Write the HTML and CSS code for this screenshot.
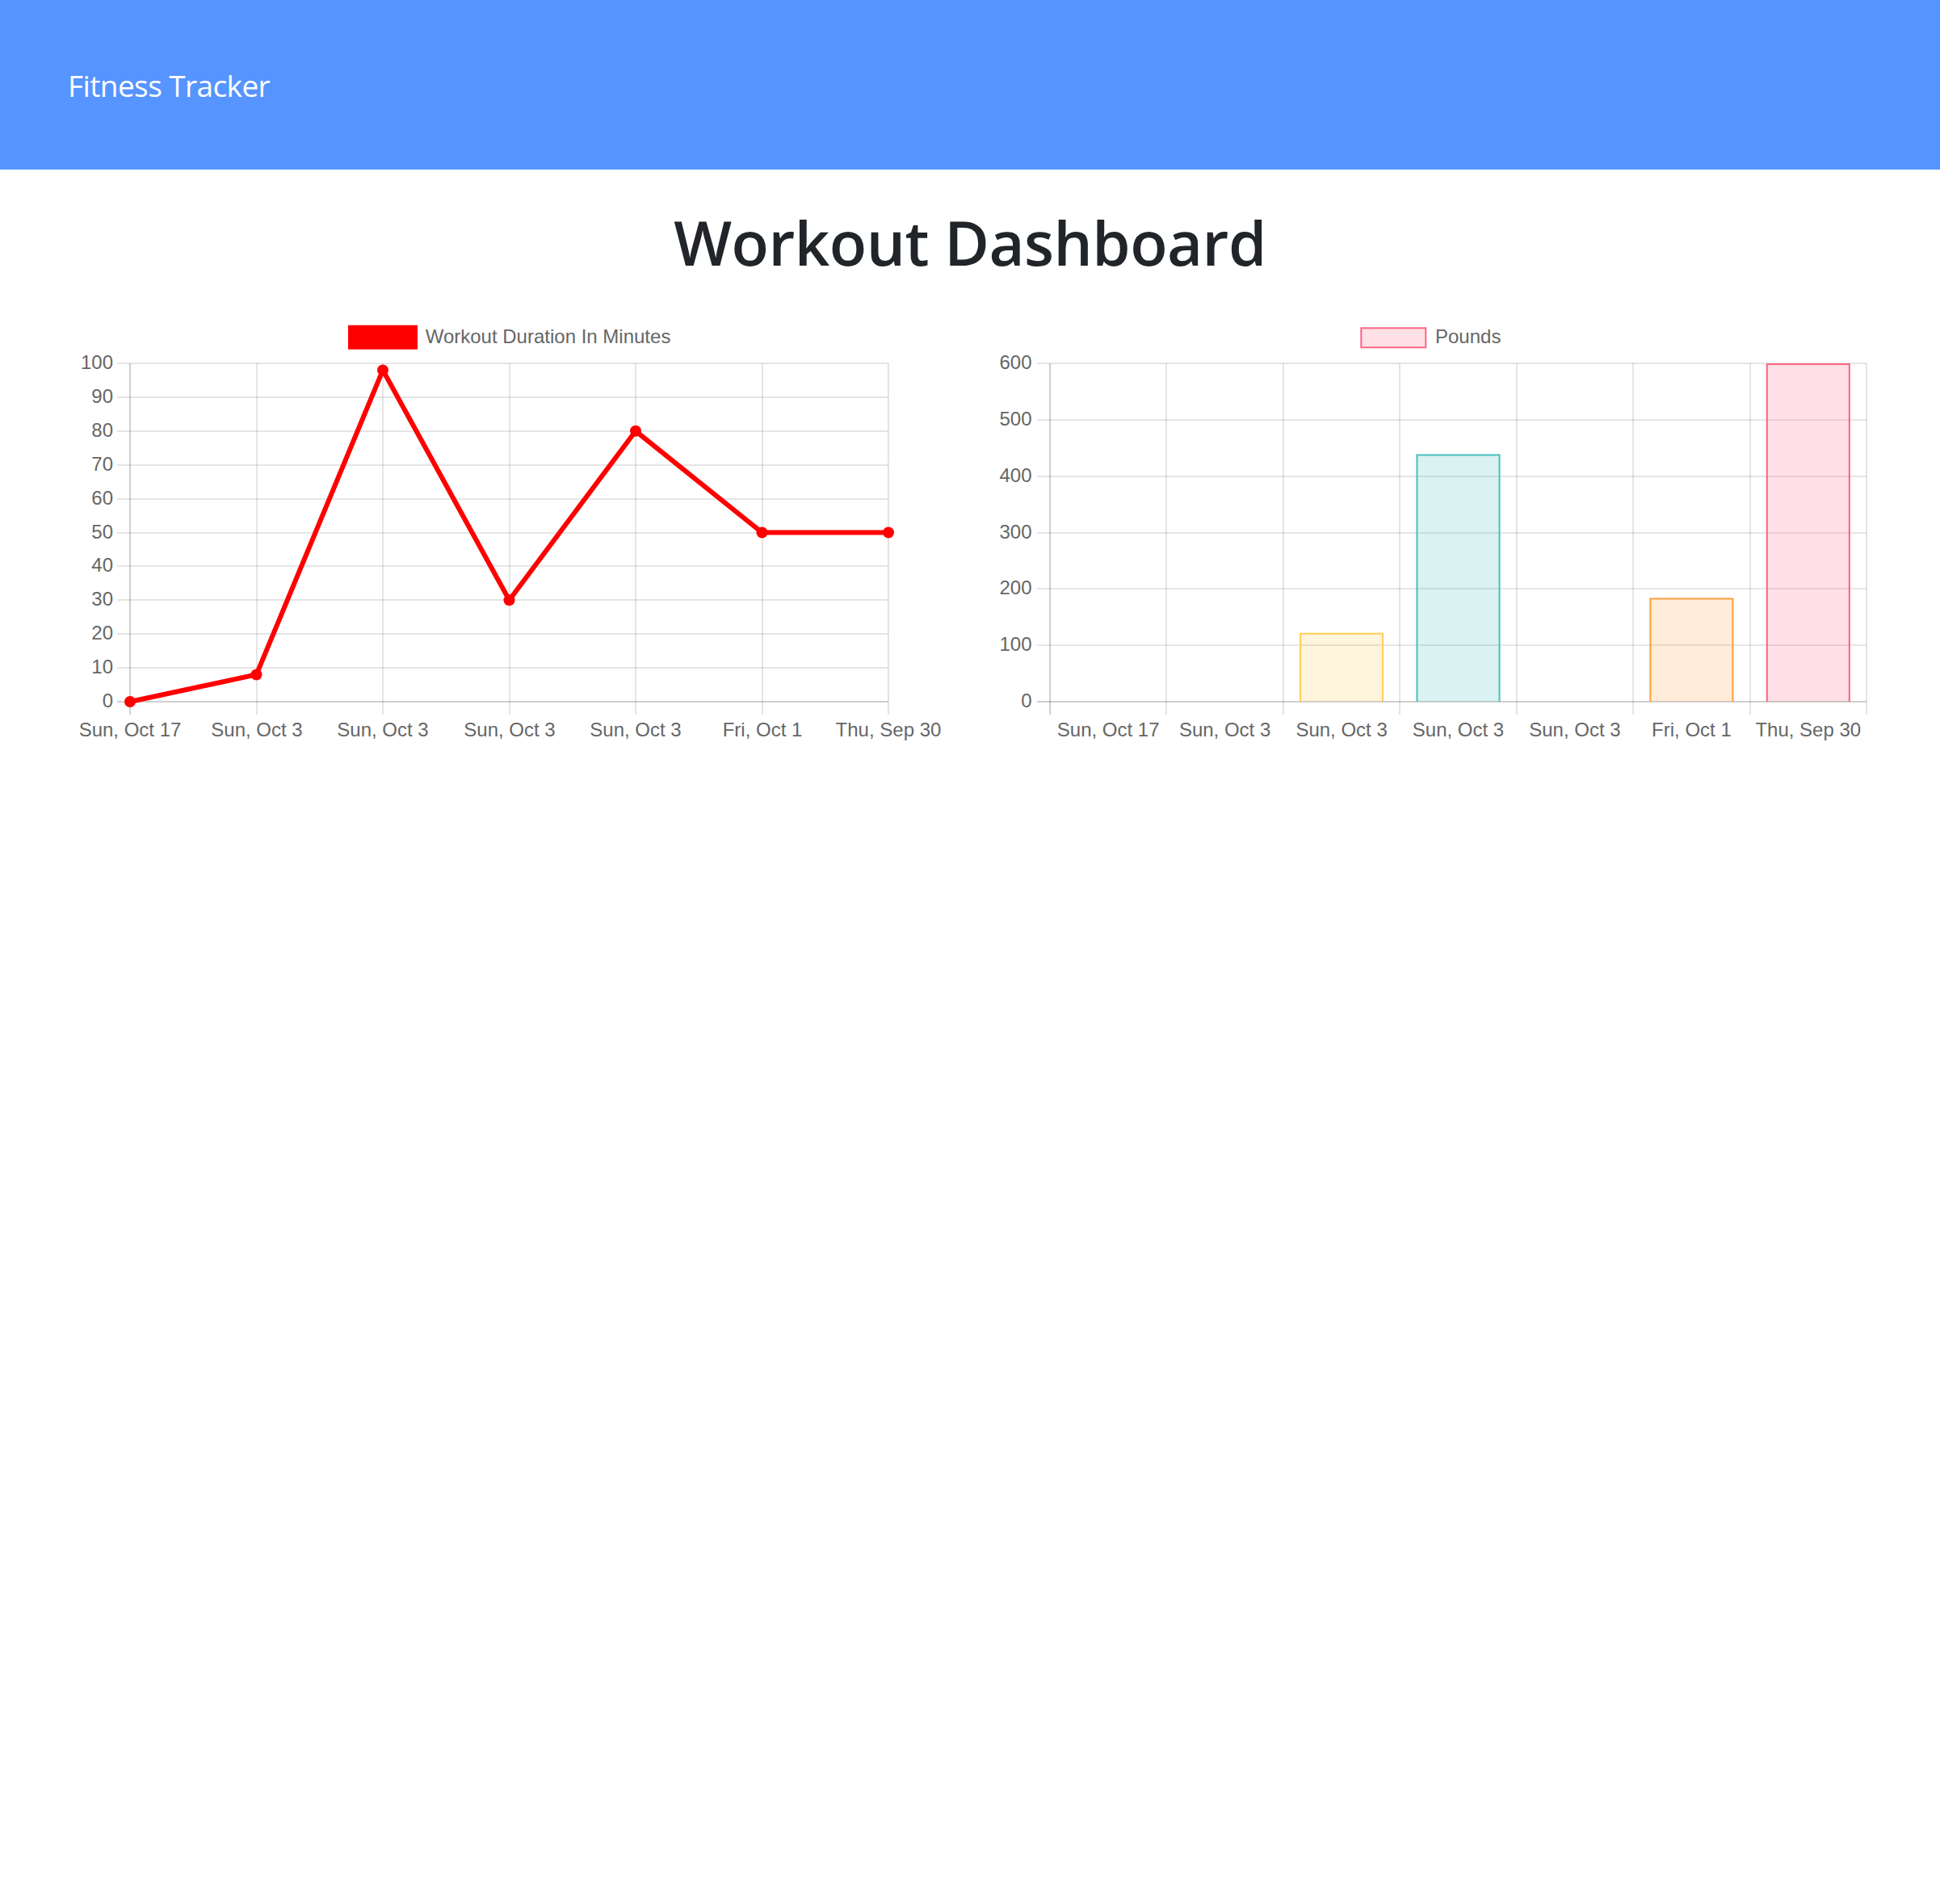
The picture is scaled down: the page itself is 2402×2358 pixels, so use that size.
FILE: index.html
```html
<!DOCTYPE html>
<html lang="en">
<head>
<meta charset="utf-8">
<title>Fitness Tracker</title>
<link rel="stylesheet" href="styles.css">
</head>
<body>
<nav class="navbar"><span class="brand">Fitness Tracker</span></nav>
<main class="main">
  <h1 class="title">Workout Dashboard</h1>
  <section class="charts">
    <div class="chart-col">
      <svg class="chart" width="1076" height="540" viewBox="0 0 1076 540">
        <g class="legend">
          <rect x="342" y="15.7" width="80" height="24" fill="#ff0000" stroke="#ff0000" stroke-width="6"/>
          <text x="434.7" y="35">Workout Duration In Minutes</text>
        </g>
        <g class="grid">
          <line x1="53" y1="60" x2="1008" y2="60"/>
          <line x1="53" y1="102" x2="1008" y2="102"/>
          <line x1="53" y1="144" x2="1008" y2="144"/>
          <line x1="53" y1="186" x2="1008" y2="186"/>
          <line x1="53" y1="228" x2="1008" y2="228"/>
          <line x1="53" y1="270" x2="1008" y2="270"/>
          <line x1="53" y1="311" x2="1008" y2="311"/>
          <line x1="53" y1="353" x2="1008" y2="353"/>
          <line x1="53" y1="395" x2="1008" y2="395"/>
          <line x1="53" y1="437" x2="1008" y2="437"/>
          <line x1="226" y1="60" x2="226" y2="495"/>
          <line x1="382" y1="60" x2="382" y2="495"/>
          <line x1="539" y1="60" x2="539" y2="495"/>
          <line x1="695" y1="60" x2="695" y2="495"/>
          <line x1="852" y1="60" x2="852" y2="495"/>
          <line x1="1008" y1="60" x2="1008" y2="495"/>
        </g>
        <g class="axis">
          <line x1="69" y1="60" x2="69" y2="495"/>
          <line x1="53" y1="479" x2="1008" y2="479"/>
        </g>
        <g class="ylabels">
          <text x="48" y="67">100</text>
          <text x="48" y="109">90</text>
          <text x="48" y="151">80</text>
          <text x="48" y="193">70</text>
          <text x="48" y="235">60</text>
          <text x="48" y="277">50</text>
          <text x="48" y="318">40</text>
          <text x="48" y="360">30</text>
          <text x="48" y="402">20</text>
          <text x="48" y="444">10</text>
          <text x="48" y="486">0</text>
        </g>
        <g class="xlabels">
          <text x="69" y="522">Sun, Oct 17</text>
          <text x="226" y="522">Sun, Oct 3</text>
          <text x="382" y="522">Sun, Oct 3</text>
          <text x="539" y="522">Sun, Oct 3</text>
          <text x="695" y="522">Sun, Oct 3</text>
          <text x="852" y="522">Fri, Oct 1</text>
          <text x="1008" y="522">Thu, Sep 30</text>
        </g>
        <polyline class="dataline" points="69,479 225.5,445.5 382,68.4 538.5,353.3 695,143.8 851.5,269.5 1008,269.5"/>
        <g class="points">
          <circle cx="69" cy="479" r="7"/>
          <circle cx="225.5" cy="445.5" r="7"/>
          <circle cx="382" cy="68.4" r="7"/>
          <circle cx="538.5" cy="353.3" r="7"/>
          <circle cx="695" cy="143.8" r="7"/>
          <circle cx="851.5" cy="269.5" r="7"/>
          <circle cx="1008" cy="269.5" r="7"/>
        </g>
      </svg>
    </div>
    <div class="chart-col">
      <svg class="chart" width="1076" height="540" viewBox="0 0 1076 540">
        <g class="legend">
          <rect x="449.3" y="16.3" width="80" height="24" fill="rgba(255,99,132,0.2)" stroke="rgb(255,99,132)" stroke-width="2"/>
          <text x="541" y="35">Pounds</text>
        </g>
        <g class="grid">
          <line x1="48" y1="60" x2="1075" y2="60"/>
          <line x1="48" y1="130" x2="1075" y2="130"/>
          <line x1="48" y1="200" x2="1075" y2="200"/>
          <line x1="48" y1="270" x2="1075" y2="270"/>
          <line x1="48" y1="339" x2="1075" y2="339"/>
          <line x1="48" y1="409" x2="1075" y2="409"/>
          <line x1="208" y1="60" x2="208" y2="495"/>
          <line x1="353" y1="60" x2="353" y2="495"/>
          <line x1="497" y1="60" x2="497" y2="495"/>
          <line x1="642" y1="60" x2="642" y2="495"/>
          <line x1="786" y1="60" x2="786" y2="495"/>
          <line x1="931" y1="60" x2="931" y2="495"/>
          <line x1="1075" y1="60" x2="1075" y2="495"/>
        </g>
        <g class="axis">
          <line x1="64" y1="60" x2="64" y2="495"/>
          <line x1="48" y1="479" x2="1075" y2="479"/>
        </g>
        <g class="ylabels">
          <text x="41.5" y="67">600</text>
          <text x="41.5" y="137">500</text>
          <text x="41.5" y="207">400</text>
          <text x="41.5" y="277">300</text>
          <text x="41.5" y="346">200</text>
          <text x="41.5" y="416">100</text>
          <text x="41.5" y="486">0</text>
        </g>
        <g class="xlabels">
          <text x="136.2" y="522">Sun, Oct 17</text>
          <text x="280.6" y="522">Sun, Oct 3</text>
          <text x="425.1" y="522">Sun, Oct 3</text>
          <text x="569.5" y="522">Sun, Oct 3</text>
          <text x="713.9" y="522">Sun, Oct 3</text>
          <text x="858.4" y="522">Fri, Oct 1</text>
          <text x="1002.8" y="522">Thu, Sep 30</text>
        </g>
        <g class="bars">
          <rect x="373.1" y="393.8" width="104" height="85.2" fill="rgba(255,206,86,0.2)"/>
          <path d="M374.1 479 V394.8 H476.1 V479" stroke="rgb(255,206,86)"/>
          <rect x="517.5" y="172.4" width="104" height="306.6" fill="rgba(75,192,192,0.2)"/>
          <path d="M518.5 479 V173.4 H620.5 V479" stroke="rgb(75,192,192)"/>
          <rect x="806.4" y="350.5" width="104" height="128.5" fill="rgba(255,159,64,0.2)"/>
          <path d="M807.4 479 V351.5 H909.4 V479" stroke="rgb(255,159,64)"/>
          <rect x="950.8" y="60" width="104" height="419" fill="rgba(255,99,132,0.2)"/>
          <path d="M951.8 479 V61 H1053.8 V479" stroke="rgb(255,99,132)"/>
        </g>
      </svg>
    </div>
  </section>
</main>
</body>
</html>
```

FILE: styles.css
```css
html, body {
  margin: 0;
  padding: 0;
  background: #ffffff;
}

body {
  font-family: "Open Sans", "Noto Sans", sans-serif;
  color: #212529;
  min-height: 2358px;
}

.navbar {
  height: 210px;
  background: #5694ff;
  display: flex;
  align-items: center;
  padding-left: 84px;
  box-sizing: border-box;
}

.brand {
  color: #ffffff;
  font-size: 37px;
  letter-spacing: -0.6px;
  line-height: 1;
  font-weight: 400;
}

.title {
  margin: 43px 0 0;
  text-align: center;
  font-size: 76px;
  line-height: 94px;
  font-weight: 600;
  letter-spacing: -0.5px;
  color: #212529;
}

.charts {
  display: flex;
  gap: 68px;
  padding: 0 90px 0 92px;
  margin-top: 43px;
}

.chart-col {
  flex: 0 0 1076px;
  width: 1076px;
}

.chart {
  display: block;
  overflow: visible;
}

.chart text {
  font-family: "Liberation Sans", Arial, sans-serif;
  font-size: 24px;
  fill: #666666;
}

.chart .ylabels text {
  text-anchor: end;
}

.chart .xlabels text {
  text-anchor: middle;
}

.chart .grid line {
  stroke: rgba(0, 0, 0, 0.1);
  stroke-width: 2;
}

.chart .axis line {
  stroke: rgba(0, 0, 0, 0.19);
  stroke-width: 2;
}

.chart .dataline {
  fill: none;
  stroke: #ff0000;
  stroke-width: 6;
}

.chart .points circle {
  fill: #ff0000;
}

.chart .bars path {
  fill: none;
  stroke-width: 2;
}
```
